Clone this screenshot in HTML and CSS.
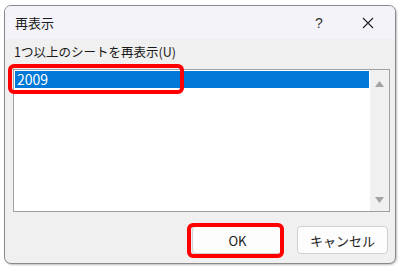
FILE: index.html
```html
<!DOCTYPE html>
<html lang="ja">
<head>
    <meta charset="UTF-8">
    <title>再表示</title>
    <link rel="stylesheet" href="styles.css">
</head>
<body>
    <div class="dialog">
        <div class="titlebar">
            <span class="title">再表示</span>
            <span class="help">?</span>
            <span class="close">
                <svg width="12" height="12" viewBox="0 0 12 12"><path d="M1 1L11 11M11 1L1 11" stroke="#222" stroke-width="1.1" fill="none"/></svg>
            </span>
        </div>
        <div class="content">
            <div class="label">1つ以上のシートを再表示(U)</div>
            <div class="listbox">
                <div class="items">
                    <div class="item selected">2009</div>
                </div>
                <div class="scrollbar">
                    <svg width="9" height="6" viewBox="0 0 9 6"><path d="M4.5 0L9 6H0Z" fill="#a3a3a3"/></svg>
                    <svg width="9" height="6" viewBox="0 0 9 6"><path d="M0 0H9L4.5 6Z" fill="#a3a3a3"/></svg>
                </div>
                <div class="mark mark-item"></div>
            </div>
            <div class="buttons">
                <button class="btn">OK<span class="mark mark-btn"></span></button>
                <button class="btn">キャンセル</button>
            </div>
        </div>
    </div>
</body>
</html>
```

FILE: styles.css
```css
* {
    margin: 0;
    padding: 0;
    box-sizing: border-box;
    font-family: "Noto Sans CJK JP", "Noto Sans", sans-serif;
}

body {
    background: #ffffff;
    width: 401px;
    height: 271px;
    overflow: hidden;
}

.dialog {
    margin: 5px 0 0 4px;
    width: 392px;
    height: 259px;
    border: 1px solid #8a8a8a;
    border-radius: 7px;
    background: #f0f0f0;
    overflow: hidden;
    box-shadow: 1px 1px 2px rgba(0,0,0,0.25);
}

.titlebar {
    height: 33px;
    background: #f3f3f9;
    display: flex;
    align-items: center;
    padding-left: 10px;
    color: #1a1a1a;
}

.title {
    font-size: 13px;
    flex-grow: 1;
}

.help {
    font-size: 14px;
    color: #333;
    width: 52px;
    text-align: center;
    font-family: "Liberation Sans", sans-serif;
    font-weight: 300;
}

.close {
    width: 50px;
    display: flex;
    justify-content: center;
    padding-right: 4px;
}

.content {
    padding: 6px 4px 0 8px;
}

.label {
    font-size: 12.5px;
    color: #1a1a1a;
    height: 24px;
    line-height: 14px;
    padding-left: 1px;
}

.listbox {
    position: relative;
    width: 377px;
    height: 143px;
    border: 1px solid #a0a0a0;
    background: #fff;
    display: flex;
}

.items {
    flex-grow: 1;
    padding: 1px 1px 0 1px;
}

.item {
    height: 17px;
    font-size: 14px;
    line-height: 17px;
    padding-left: 2px;
    color: #000;
}

.item.selected {
    background: #0078d7;
    color: #fff;
}

.scrollbar {
    width: 19px;
    background: #f0f0f0;
    display: flex;
    flex-direction: column;
    justify-content: space-between;
    align-items: center;
    padding: 11px 0 8px;
}

.buttons {
    display: flex;
    justify-content: flex-end;
    gap: 14px;
    margin-top: 14px;
    padding-right: 3px;
}

.btn {
    position: relative;
    width: 91px;
    height: 28px;
    background: #fdfdfd;
    border: 1px solid #d0d0d0;
    border-radius: 4px;
    font-size: 13px;
    color: #1a1a1a;
}

.mark {
    position: absolute;
    border: 4px solid #ff0000;
    border-radius: 6px;
}

.mark-item {
    left: -6px;
    top: -6px;
    width: 176px;
    height: 30px;
}

.mark-btn {
    left: -6px;
    top: -4px;
    width: 97px;
    height: 35px;
}
```
